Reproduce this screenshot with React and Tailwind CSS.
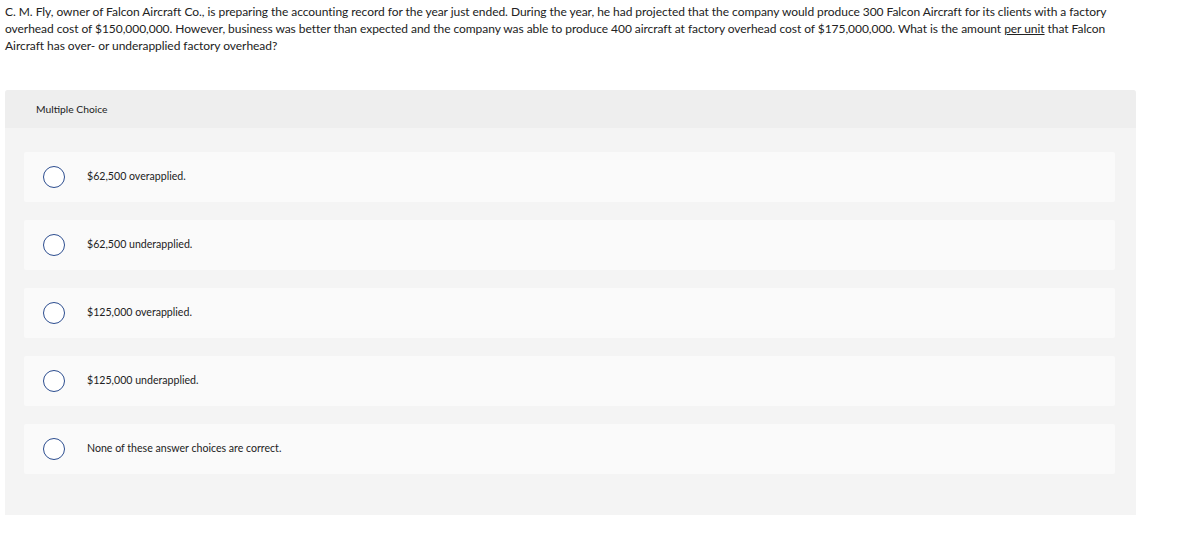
const choices = [
  "$62,500 overapplied.",
  "$62,500 underapplied.",
  "$125,000 overapplied.",
  "$125,000 underapplied.",
  "None of these answer choices are correct.",
];

export default function App() {
  return (
    <div className="min-h-screen bg-white text-[#222] font-['Lato','Liberation_Sans',sans-serif]">
      {/* question */}
      <p className="w-[1122px] pl-[5px] pt-[3px] text-[12px] leading-[17px] tracking-[-0.05px]">
        C. M. Fly, owner of Falcon Aircraft Co., is preparing the accounting record for the year just ended. During the
        year, he had projected that the company would produce 300 Falcon Aircraft for its clients with a factory overhead
        cost of $150,000,000. However, business was better than expected and the company was able to produce 400 aircraft
        at factory overhead cost of $175,000,000. What is the amount <span className="underline">per unit</span> that
        Falcon Aircraft has over- or underapplied factory overhead?
      </p>

      {/* multiple choice block */}
      <div className="mt-[36px] ml-[5px] w-[1131px] rounded-t-[3px] bg-[#f4f4f4]">
        <div className="flex h-[38px] items-center rounded-t-[3px] bg-[#eeeeee] pl-[31px] pt-[2px] text-[10.3px]">
          Multiple Choice
        </div>
        <div className="flex flex-col gap-[18px] pt-[24px] pb-[41px] pl-[19px] pr-[21px]">
          {choices.map((c) => (
            <div key={c} className="flex h-[50px] items-center rounded-[2px] bg-[#fafafa] pl-[19px]">
              <span className="h-[22px] w-[22px] shrink-0 rounded-full border-[1.5px] border-[#2c4d8f] bg-white" />
              <span className="ml-[22px] text-[10.6px]">{c}</span>
            </div>
          ))}
        </div>
      </div>
    </div>
  );
}
